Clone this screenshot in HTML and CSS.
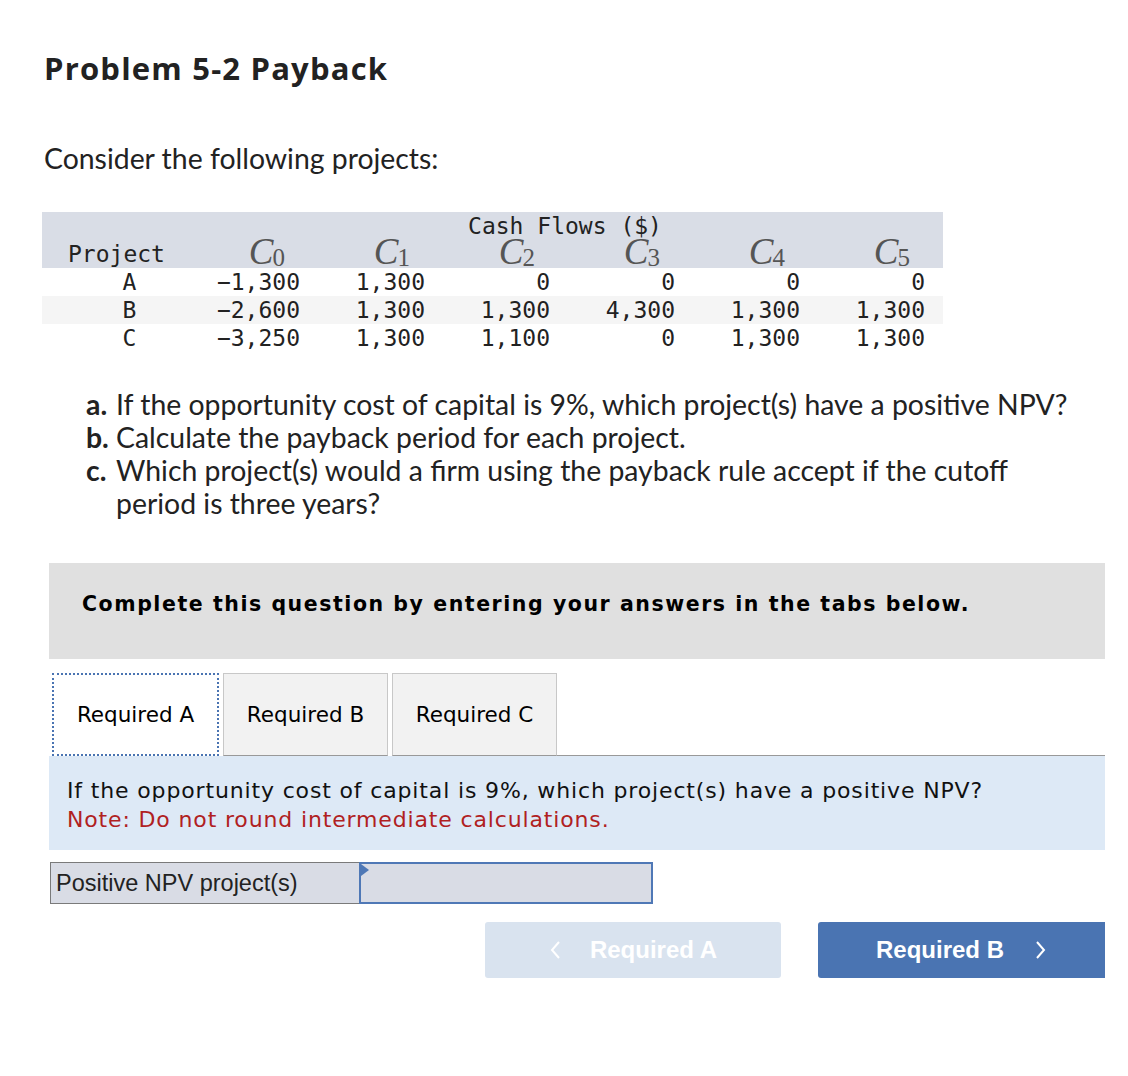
FILE: index.html
```html
<!DOCTYPE html>
<html lang="en">
<head>
<meta charset="utf-8">
<title>Problem 5-2 Payback</title>
<link rel="stylesheet" href="styles.css">
</head>
<body>
<div class="page">
  <h1 class="title">Problem 5-2 Payback</h1>
  <p class="intro">Consider the following projects:</p>

  <table class="cf">
    <colgroup>
      <col class="col-proj">
      <col class="col-n"><col class="col-n"><col class="col-n"><col class="col-n"><col class="col-n"><col class="col-last">
    </colgroup>
    <thead>
      <tr class="hrow">
        <th></th>
        <th colspan="6" class="cf-title">Cash Flows ($)</th>
      </tr>
      <tr class="hrow">
        <th class="proj">Project</th>
        <th class="ch"><i>C</i><sub>0</sub></th>
        <th class="ch"><i>C</i><sub>1</sub></th>
        <th class="ch"><i>C</i><sub>2</sub></th>
        <th class="ch"><i>C</i><sub>3</sub></th>
        <th class="ch"><i>C</i><sub>4</sub></th>
        <th class="ch"><i>C</i><sub>5</sub></th>
      </tr>
    </thead>
    <tbody>
      <tr>
        <td class="pname">A</td><td>−1,300</td><td>1,300</td><td>0</td><td>0</td><td>0</td><td>0</td>
      </tr>
      <tr class="alt">
        <td class="pname">B</td><td>−2,600</td><td>1,300</td><td>1,300</td><td>4,300</td><td>1,300</td><td>1,300</td>
      </tr>
      <tr>
        <td class="pname">C</td><td>−3,250</td><td>1,300</td><td>1,100</td><td>0</td><td>1,300</td><td>1,300</td>
      </tr>
    </tbody>
  </table>

  <div class="questions">
    <b class="ql">a.</b><span>If the opportunity cost of capital is 9%, which project(s) have a positive NPV?</span>
    <b class="ql">b.</b><span>Calculate the payback period for each project.</span>
    <b class="ql">c.</b><span>Which project(s) would a firm using the payback rule accept if the cutoff period is three years?</span>
  </div>

  <div class="banner">Complete this question by entering your answers in the tabs below.</div>

  <div class="tabs">
    <div class="tab active">Required A</div>
    <div class="tab">Required B</div>
    <div class="tab">Required C</div>
    <div class="tab-rest"></div>
  </div>

  <div class="panel">
    <p class="panel-q">If the opportunity cost of capital is 9%, which project(s) have a positive NPV?</p>
    <p class="panel-note">Note: Do not round intermediate calculations.</p>
  </div>

  <div class="answer">
    <div class="answer-label">Positive NPV project(s)</div>
    <div class="answer-input"><span class="flag"></span></div>
  </div>

  <div class="nav">
    <button class="btn btn-prev" type="button">
      <svg class="chev" width="12" height="20" viewBox="0 0 12 20"><path d="M10 2 L3 10 L10 18" fill="none" stroke="currentColor" stroke-width="2"/></svg>
      <span>Required A</span>
    </button>
    <button class="btn btn-next" type="button">
      <span>Required B</span>
      <svg class="chev" width="12" height="20" viewBox="0 0 12 20"><path d="M2 2 L9 10 L2 18" fill="none" stroke="currentColor" stroke-width="2"/></svg>
    </button>
  </div>
</div>
</body>
</html>
```

FILE: styles.css
```css
html, body {
  margin: 0;
  padding: 0;
  background: #ffffff;
}

.page {
  padding: 50px 23px 0 44px;
  font-family: "Lato", "Open Sans", sans-serif;
  color: #222222;
}

.title {
  margin: 0;
  font-family: "Open Sans", "Lato", sans-serif;
  font-size: 31px;
  letter-spacing: 1.2px;
  line-height: 36px;
  font-weight: 700;
  color: #222222;
}

.intro {
  margin: 57px 0 0 0;
  font-size: 28.4px;
  line-height: 30px;
}

/* cash-flow table */
.cf {
  margin: 39px 0 0 -2px;
  border-collapse: collapse;
  table-layout: fixed;
  width: 901px;
  font-family: "DejaVu Sans Mono", "Liberation Mono", monospace;
  font-size: 23px;
  color: #222222;
}
.col-proj { width: 145px; }
.col-n { width: 125px; }
.col-last { width: 131px; }

.cf th, .cf td {
  padding: 0;
  height: 28px;
  line-height: 28px;
  font-weight: normal;
  white-space: nowrap;
}
.hrow th { background: #d9dde6; }
.cf-title { text-align: center; }
.proj { text-align: left; padding-left: 26px !important; }
.ch {
  text-align: right;
  padding-right: 27px !important;
  font-family: "Liberation Serif", "Times New Roman", serif;
  color: #555555;
  line-height: 28px;
}
.ch i {
  font-size: 37px;
  line-height: 20px;
  font-style: italic;
  vertical-align: -3px;
}
.ch sub {
  font-size: 25px;
  line-height: 10px;
  vertical-align: -5px;
  margin-left: -1px;
}
.hrow .ch:last-child { padding-right: 33px !important; }

.cf td { text-align: right; padding-right: 12px; }
.cf td:last-child { padding-right: 18px; }
.cf td.pname { text-align: center; padding-left: 30px; padding-right: 0; }
.cf tr.alt td { background: #f5f5f5; }

/* questions */
.questions {
  margin: 36px 0 0 42px;
  width: 996px;
  display: grid;
  grid-template-columns: 30px 1fr;
  font-size: 28.4px;
  line-height: 33px;
  color: #222222;
}
.ql { font-weight: 700; }

/* banner */
.banner {
  margin: 43px 0 0 5px;
  padding: 29px 33px 43px;
  background: #e0e0e0;
  font-family: "DejaVu Sans", Verdana, sans-serif;
  font-weight: 700;
  font-size: 20.5px;
  letter-spacing: 1.55px;
  line-height: 24px;
  color: #000000;
}

/* tabs */
.tabs {
  margin: 14px 0 0 5px;
  display: flex;
  align-items: flex-end;
  font-family: "DejaVu Sans", Verdana, sans-serif;
  font-size: 21.5px;
  color: #000000;
}
.tab {
  box-sizing: border-box;
  height: 83px;
  display: flex;
  align-items: center;
  justify-content: center;
  background: #f2f2f2;
  border: 1px solid #c8c8c8;
  border-bottom: 1px solid #999999;
  margin-left: 4px;
  width: 165px;
}
.tab.active {
  margin-left: 3px;
  width: 167px;
  background: #ffffff;
  border: 2px dotted #4a74b2;
}
.tab-rest {
  flex: 1;
  height: 0;
  border-bottom: 1px solid #999999;
}

/* panel */
.panel {
  margin-left: 5px;
  padding: 20px 18px 16px;
  background: #dde9f6;
  font-family: "DejaVu Sans", Verdana, sans-serif;
  font-size: 22px;
  letter-spacing: 0.85px;
  line-height: 29px;
}
.panel p { margin: 0; }
.panel-q { color: #111111; }
.panel-note { color: #b0211f; }

/* answer */
.answer {
  margin: 12px 0 0 6px;
  display: flex;
  height: 42px;
}
.answer-label {
  box-sizing: border-box;
  width: 309px;
  height: 42px;
  border: 1px solid #7a7a7a;
  border-right: none;
  background: #d9dce5;
  font-family: "Liberation Sans", Arial, sans-serif;
  font-size: 23.5px;
  line-height: 40px;
  padding-left: 5px;
  color: #222222;
}
.answer-input {
  position: relative;
  box-sizing: border-box;
  width: 294px;
  height: 42px;
  border: 2px solid #4f78b6;
  background: #d9dce5;
}
.flag {
  position: absolute;
  top: 0;
  left: 0;
  width: 0;
  height: 0;
  border-top: 6px solid transparent;
  border-bottom: 6px solid transparent;
  border-left: 8px solid #4f78b6;
}

/* nav buttons */
.nav {
  margin-top: 18px;
  display: flex;
  justify-content: flex-end;
  gap: 37px;
}
.btn {
  height: 56px;
  border: none;
  border-radius: 3px;
  display: flex;
  align-items: center;
  justify-content: center;
  font-family: "Liberation Sans", Arial, sans-serif;
  font-weight: 700;
  font-size: 24px;
  color: #ffffff;
  padding: 0;
}
.btn-prev {
  width: 296px;
  background: #d9e3ef;
  gap: 29px;
}
.btn-next {
  width: 287px;
  background: #4a74b2;
  gap: 31px;
  border-radius: 3px 0 0 3px;
}
.chev { display: block; }
```
